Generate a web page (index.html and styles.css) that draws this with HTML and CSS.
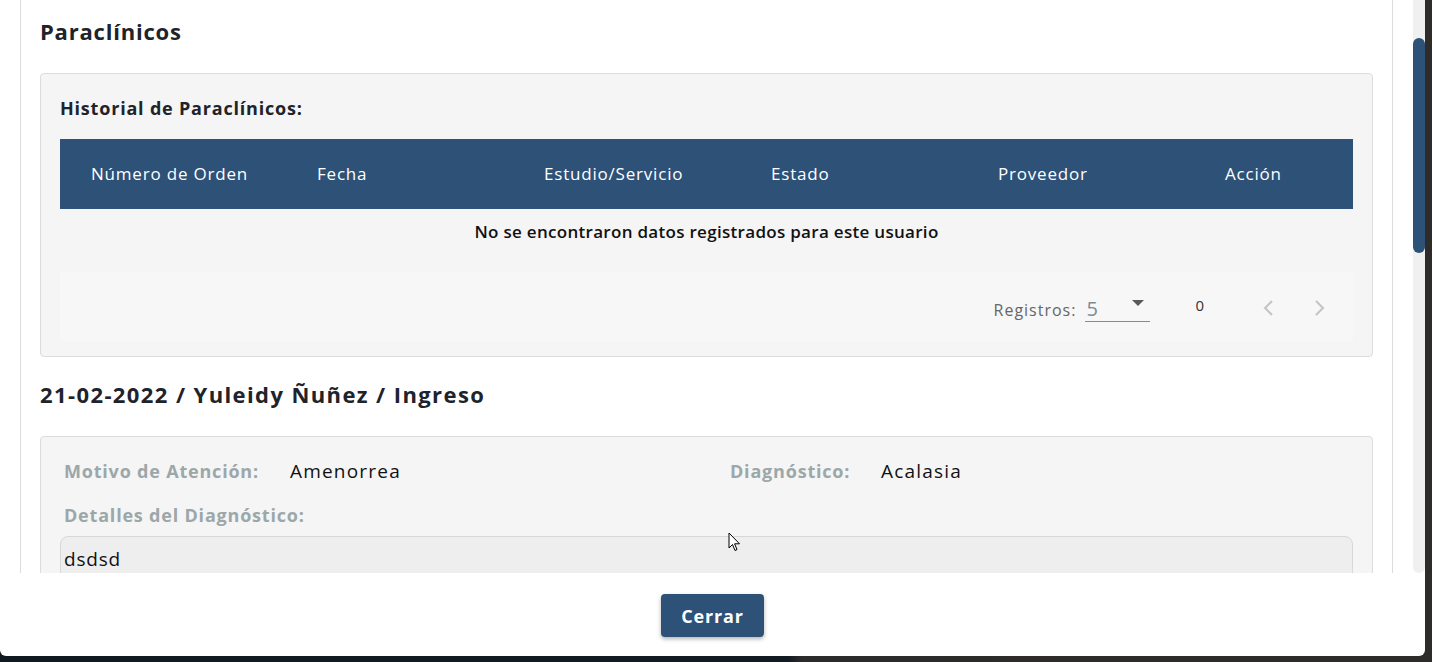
FILE: index.html
```html
<!DOCTYPE html>
<html lang="es">
<head>
<meta charset="utf-8">
<title>Paraclínicos</title>
<link rel="stylesheet" href="styles.css">
</head>
<body>
<div class="stage">
  <div class="modal">
    <div class="modal-body">
      <div class="content">
        <div class="card">
          <h2 class="section-title">Paraclínicos</h2>
          <div class="panel">
            <h3 class="panel-label">Historial de Paraclínicos:</h3>
            <table class="grid">
              <thead>
                <tr>
                  <th class="c1">Número de Orden</th>
                  <th class="c2">Fecha</th>
                  <th class="c3">Estudio/Servicio</th>
                  <th class="c4">Estado</th>
                  <th class="c5">Proveedor</th>
                  <th class="c6">Acción</th>
                </tr>
              </thead>
              <tbody>
                <tr><td colspan="6" class="empty">No se encontraron datos registrados para este usuario</td></tr>
              </tbody>
            </table>
            <div class="paginator">
              <span class="pg-label">Registros:</span>
              <span class="pg-select"><span class="pg-value">5</span><span class="pg-arrow"></span></span>
              <span class="pg-count">0</span>
              <span class="pg-nav">
                <svg width="14" height="20" viewBox="0 0 14 20"><path d="M10 3 L3 10 L10 17" fill="none" stroke="#c4c4c4" stroke-width="2"/></svg>
                <svg width="14" height="20" viewBox="0 0 14 20"><path d="M4 3 L11 10 L4 17" fill="none" stroke="#c4c4c4" stroke-width="2"/></svg>
              </span>
            </div>
          </div>
          <h2 class="section-title second">21-02-2022 / Yuleidy Ñuñez / Ingreso</h2>
          <div class="panel detail">
            <div class="row first">
              <div class="half">
                <span class="lbl w1">Motivo de Atención:</span>
                <span class="val">Amenorrea</span>
              </div>
              <div class="half right">
                <span class="lbl w2">Diagnóstico:</span>
                <span class="val">Acalasia</span>
              </div>
            </div>
            <div class="row">
              <span class="lbl">Detalles del Diagnóstico:</span>
            </div>
            <div class="textarea">dsdsd</div>
          </div>
        </div>
      </div>
      <div class="scrollbar"><div class="thumb"></div></div>
    </div>
    <div class="modal-footer">
      <button class="btn">Cerrar</button>
    </div>
    <svg class="cursor" width="14" height="22" viewBox="0 0 14 22"><path d="M1 1 L1 16 L4.5 12.5 L7 18.5 L9 17.6 L6.6 11.8 L11.5 11.8 Z" fill="#fff" stroke="#000" stroke-width="1"/></svg>
  </div>
</div>
</body>
</html>
```

FILE: styles.css
```css
* { box-sizing: border-box; }
html, body { margin: 0; padding: 0; }
body {
  width: 1432px;
  height: 662px;
  overflow: hidden;
  background: linear-gradient(90deg, #101820 0%, #121a22 55%, #2b2b2b 56%, #2e2c2a 100%);
  font-family: "Open Sans", "Noto Sans", sans-serif;
  color: #212529;
}
.stage { display: flex; }
.modal {
  position: relative;
  width: 1425px;
  height: 656px;
  background: #fff;
  border-radius: 0 0 6px 6px;
  display: flex;
  flex-direction: column;
}
.modal-body {
  height: 573px;
  display: flex;
  overflow: hidden;
}
.content {
  flex: 1;
  padding: 0 20px;
}
.card {
  border-left: 1px solid #dcdcdc;
  border-right: 1px solid #dcdcdc;
  height: 100%;
  padding: 16px 19px 0 19px;
}
.section-title {
  margin: 0;
  font-size: 22px;
  line-height: 30px;
  font-weight: 700;
  color: #20232a;
  letter-spacing: 0.8px;
}
.section-title.second { margin-top: 22px; letter-spacing: 1.4px; }
.panel {
  margin-top: 27px;
  background: #f5f5f5;
  border: 1px solid #dcdcdc;
  border-radius: 4px;
  padding: 23px 19px 15px 19px;
}
.panel-label {
  margin: 0 0 20px 0;
  font-size: 18px;
  line-height: 22px;
  font-weight: 700;
  color: #20232a;
  letter-spacing: 0.8px;
}
.grid {
  width: 100%;
  border-collapse: collapse;
  table-layout: fixed;
}
.grid th {
  background: #2d5177;
  color: #fff;
  height: 70px;
  font-weight: 400;
  font-size: 17px;
  letter-spacing: 0.8px;
  text-align: left;
  padding: 0 0 2px 31px;
  white-space: nowrap;
}
.grid th.c1 { width: 226px; }
.grid th.c2 { width: 227px; }
.grid th.c3 { width: 227px; }
.grid th.c4 { width: 227px; }
.grid th.c5 { width: 227px; }
.grid .empty {
  height: 44px;
  text-align: center;
  font-size: 17px;
  letter-spacing: 0.3px;
  font-weight: 600;
  color: #111;
  padding: 0;
}
.paginator {
  margin-top: 19px;
  height: 69px;
  background: #f7f7f7;
  display: flex;
  align-items: center;
  justify-content: flex-end;
  padding-right: 27px;
  padding-top: 4px;
}
.pg-label {
  font-size: 16px;
  letter-spacing: 1px;
  color: #666;
  margin-right: 9px;
  margin-top: 3px;
}
.pg-select {
  width: 65px;
  height: 26px;
  border-bottom: 1px solid #8a8a8a;
  display: flex;
  align-items: center;
  justify-content: space-between;
  padding: 0 6px 0 1px;
}
.pg-value { font-size: 20px; color: #7d8b98; }
.pg-arrow {
  width: 0; height: 0;
  border-left: 6px solid transparent;
  border-right: 6px solid transparent;
  border-top: 6px solid #5a5a5a;
  margin-top: -10px;
}
.pg-count {
  margin-left: 45px;
  font-size: 15px;
  color: #333;
  margin-top: -7px;
}
.pg-nav {
  margin-left: 58px;
  display: flex;
  gap: 36px;
  margin-top: -2px;
}
.detail { padding: 20px 19px 0 19px; height: 200px; }
.row {
  display: flex;
  align-items: center;
  height: 28px;
  margin-bottom: 7px;
}
.row.first { margin-bottom: 16px; }
.half { display: flex; align-items: center; width: 666px; }
.half.right { width: auto; }
.lbl {
  font-size: 18px;
  font-weight: 700;
  color: #9ca7a9;
  padding-left: 4px;
  letter-spacing: 0.8px;
}
.lbl.w1 { width: 230px; }
.lbl.w2 { width: 155px; }
.val { font-size: 19px; color: #111; letter-spacing: 1.2px; }
.textarea {
  margin-top: 0;
  background: #eeeeee;
  border: 1px solid #d8d8d8;
  border-radius: 8px;
  height: 60px;
  padding: 9px 3px;
  font-size: 19px;
  letter-spacing: 0.8px;
  color: #111;
}
.scrollbar {
  width: 12px;
  background: #f0f0f0;
  border-radius: 0 0 6px 6px;
  padding-top: 38px;
}
.thumb {
  height: 215px;
  background: #2d5177;
  border-radius: 6px;
}
.modal-footer {
  flex: 1;
  display: flex;
  justify-content: center;
  padding-top: 21px;
}
.btn {
  width: 103px;
  height: 43px;
  background: #2d5177;
  color: #fff;
  border: none;
  border-radius: 4px;
  box-shadow: 0 2px 4px rgba(0,0,0,0.3);
  font-family: inherit;
  font-size: 18px;
  font-weight: 700;
  letter-spacing: 0.8px;
}
.cursor {
  position: absolute;
  left: 728px;
  top: 532px;
}
```
